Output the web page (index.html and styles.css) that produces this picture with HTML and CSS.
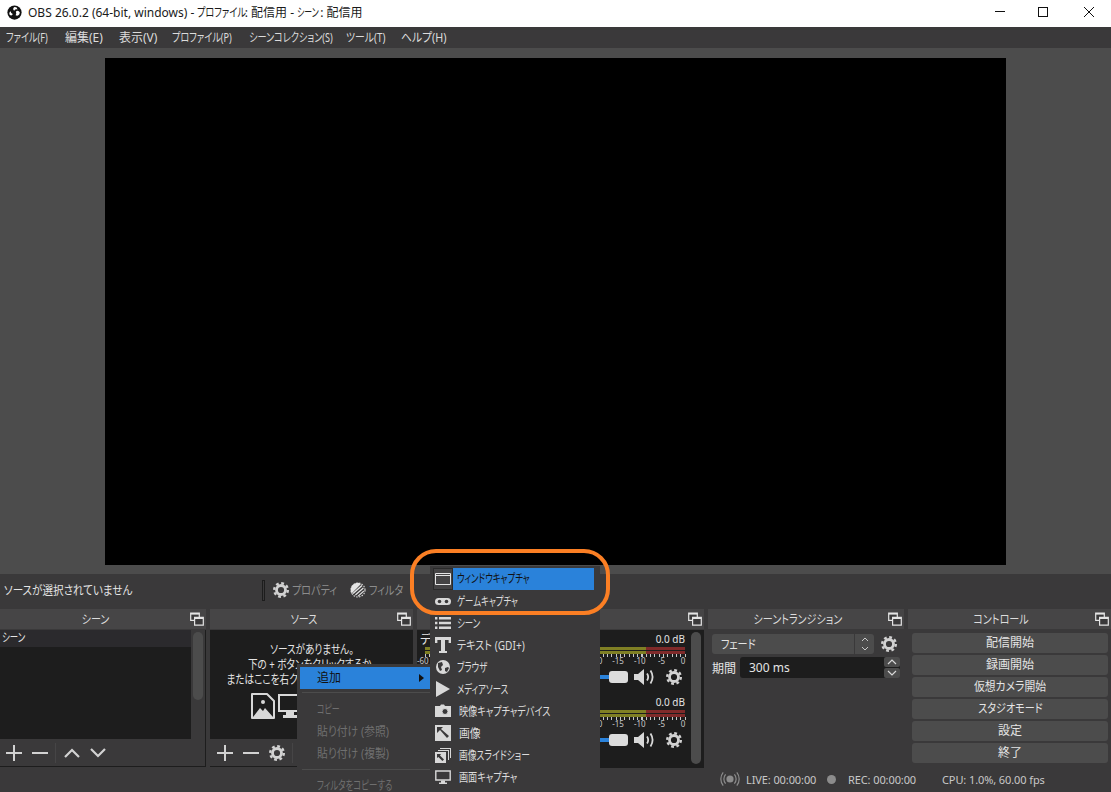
FILE: index.html
```html
<!DOCTYPE html>
<html lang="ja">
<head>
<meta charset="utf-8">
<title>OBS 26.0.2</title>
<link rel="stylesheet" href="styles.css">
</head>
<body>
<svg class="defs" width="0" height="0" aria-hidden="true">
  <symbol id="gear" viewBox="0 0 16 16">
    <circle cx="8" cy="8" r="6.8" fill="none" stroke="#d2d2d2" stroke-width="2.4" stroke-dasharray="2.8 2.54"/>
    <circle cx="8" cy="8" r="4.5" fill="none" stroke="#d2d2d2" stroke-width="2.800"/>
  </symbol>
  <symbol id="float" viewBox="0 0 14 14">
    <path d="M.7 1h8.6v7.4H.7z" fill="#3a393a" stroke="#e4e4e4" stroke-width="1.2"/>
    <path d="M.7 1h8.6v1.6H.7z" fill="#e4e4e4"/>
    <path d="M4.6 5.4h8.7v7.8H4.6z" fill="#3a393a" stroke="#e4e4e4" stroke-width="1.2"/>
    <path d="M4.6 5.4h8.7V7H4.6z" fill="#e4e4e4"/>
  </symbol>
  <symbol id="plus" viewBox="0 0 16 16"><path d="M8 0v16M0 8h16" stroke="#d2d2d2" stroke-width="2"/></symbol>
  <symbol id="minus" viewBox="0 0 16 16"><path d="M0 8h16" stroke="#d2d2d2" stroke-width="2"/></symbol>
  <symbol id="up" viewBox="0 0 16 16"><path d="M1 12l7-7 7 7" fill="none" stroke="#d2d2d2" stroke-width="2.2"/></symbol>
  <symbol id="down" viewBox="0 0 16 16"><path d="M1 4l7 7 7-7" fill="none" stroke="#d2d2d2" stroke-width="2.2"/></symbol>
  <symbol id="speaker" viewBox="0 0 22 16">
    <path d="M0 5h4l6-5v16l-6-5H0z" fill="#d8d8d8"/>
    <path d="M13 4.5q2.4 3.5 0 7M16.5 1.5q4.2 6.5 0 13" fill="none" stroke="#d8d8d8" stroke-width="1.8"/>
  </symbol>
</svg>

<div class="app">
  <header class="titlebar">
    <svg class="logo" viewBox="0 0 16 16">
      <circle cx="8" cy="8" r="7.6" fill="#111"/>
      <path d="M8 2.2a3 3 0 0 1 3.2 2.6 3.4 3.4 0 0 0-3.6 1.3A2.2 2.2 0 0 1 8 2.2z" fill="#fff"/>
      <path d="M13.2 9.8a3 3 0 0 1-4 1.1 3.4 3.4 0 0 0 .2-3.7 2.2 2.2 0 0 1 3.8 2.6z" fill="#fff"/>
      <path d="M3 10.6a3 3 0 0 1 .9-4 3.4 3.4 0 0 0 2.3 3 2.2 2.2 0 0 1-3.2 1z" fill="#fff"/>
    </svg>
    <span class="title-text">OBS 26.0.2 (64-bit, windows) - <span class="k x76 t-prof">プロファイル</span>: 配信用 - <span class="k x66 t-scene">シーン</span>: 配信用</span>
    <div class="win-controls">
      <span class="win-min"></span>
      <span class="win-max"></span>
      <svg class="win-close" viewBox="0 0 10 10"><path d="M0 0l10 10M10 0L0 10" stroke="#111" stroke-width="1"/></svg>
    </div>
  </header>

  <nav class="menubar">
    <span class="k x76">ファイル(F)</span><span>編集(E)</span><span>表示(V)</span><span class="k x76">プロファイル(P)</span><span class="k x76">シーンコレクション(S)</span><span class="k x82">ツール(T)</span><span class="k x90">ヘルプ(H)</span>
  </nav>

  <section class="preview"><div class="canvas"></div></section>

  <section class="ctxbar">
    <span class="ctx-label"><span class="k x88">ソースが選択されていません</span></span>
    <span class="ctx-sep"></span>
    <svg class="ctx-icon"><use href="#gear"/></svg>
    <span class="ctx-btn k x84">プロパティ</span>
    <svg class="ctx-icon filter-icon" viewBox="0 0 16 16">
      <circle cx="8" cy="8" r="7" fill="none" stroke="#d2d2d2" stroke-width="1.2" stroke-dasharray="1.6 1.2"/>
      <path d="M8 .8a7.2 7.2 0 0 0-6.4 10.6L11 2A7 7 0 0 0 8 .8z" fill="#e4e4e4"/>
      <path d="M2.5 11l9-8 1 1-9 8zM5 12.5l8-7 .8 1-8 7zM7.5 14l6-5.5.6 1-5.5 5z" fill="#e4e4e4"/>
    </svg>
    <span class="ctx-btn k x84">フィルタ</span>
  </section>

  <section class="docks">
    <div class="dock dock-scene">
      <div class="dock-title"><span class="k x84">シーン</span><svg class="float-icon"><use href="#float"/></svg></div>
      <div class="dock-body">
        <div class="list-wrap">
          <div class="list">
            <div class="list-row"><span class="k x70">シーン</span></div>
          </div>
          <div class="scroll-gutter"><div class="scroll-thumb"></div></div>
        </div>
        <div class="dock-tools">
          <svg class="tool"><use href="#plus"/></svg>
          <svg class="tool"><use href="#minus"/></svg>
          <span class="tool-sep"></span>
          <svg class="tool"><use href="#up"/></svg>
          <svg class="tool"><use href="#down"/></svg>
        </div>
      </div>
    </div>

    <div class="dock dock-source">
      <div class="dock-title"><span class="k x84">ソース</span><svg class="float-icon"><use href="#float"/></svg></div>
      <div class="dock-body">
        <div class="source-empty">
          <p>ソースがありません。<br>下の + ボタンをクリックするか、<br>またはここを右クリックして追加しましょう</p>
          <div class="source-art">
            <svg class="art-image" viewBox="0 0 24 26">
              <path d="M1 1h15l7 7v17H1z" fill="none" stroke="#d8d8d8" stroke-width="2" stroke-linejoin="round"/>
              <circle cx="12" cy="9" r="2" fill="#d8d8d8"/>
              <path d="M2 24l7-9 3 3 2-3 8 9z" fill="#d8d8d8"/>
            </svg>
            <svg class="art-monitor" viewBox="0 0 24 26">
              <path d="M1 2h22v16H1z" fill="none" stroke="#d8d8d8" stroke-width="2"/>
              <path d="M8 19h8v3h3v3H5v-3h3z" fill="#d8d8d8"/>
            </svg>
          </div>
        </div>
        <div class="dock-tools">
          <svg class="tool"><use href="#plus"/></svg>
          <svg class="tool"><use href="#minus"/></svg>
          <svg class="tool"><use href="#gear"/></svg>
          <span class="tool-sep"></span>
        </div>
      </div>
    </div>

    <div class="dock dock-mixer">
      <div class="dock-title"><span class="k x84">音声ミキサー</span><svg class="float-icon"><use href="#float"/></svg></div>
      <div class="mixer-body">
        <div class="channels">
          <div class="channel">
            <div class="ch-head"><span>デスクトップ音声</span><span>0.0 dB</span></div>
            <div class="meter"><div class="meter-bar"></div><div class="meter-bar"></div></div>
            <div class="ticks"></div>
            <div class="scale"><span>-60</span><span>-55</span><span>-50</span><span>-45</span><span>-40</span><span>-35</span><span>-30</span><span>-25</span><span>-20</span><span>-15</span><span>-10</span><span>-5</span><span>0</span></div>
            <div class="ch-controls">
              <div class="slider"><div class="slider-fill"></div><div class="slider-handle"></div></div>
              <svg class="speaker"><use href="#speaker"/></svg>
              <svg class="ch-gear"><use href="#gear"/></svg>
            </div>
          </div>
          <div class="channel">
            <div class="ch-head"><span>マイク</span><span>0.0 dB</span></div>
            <div class="meter"><div class="meter-bar"></div><div class="meter-bar"></div></div>
            <div class="ticks"></div>
            <div class="scale"><span>-60</span><span>-55</span><span>-50</span><span>-45</span><span>-40</span><span>-35</span><span>-30</span><span>-25</span><span>-20</span><span>-15</span><span>-10</span><span>-5</span><span>0</span></div>
            <div class="ch-controls">
              <div class="slider"><div class="slider-fill"></div><div class="slider-handle"></div></div>
              <svg class="speaker"><use href="#speaker"/></svg>
              <svg class="ch-gear"><use href="#gear"/></svg>
            </div>
          </div>
        </div>
        <div class="mixer-scroll"></div>
      </div>
    </div>

    <div class="dock dock-trans">
      <div class="dock-title"><span class="k x84">シーントランジション</span><svg class="float-icon"><use href="#float"/></svg></div>
      <div class="trans-body">
        <div class="trans-row">
          <div class="select">
            <span class="select-text"><span class="k x84">フェード</span></span>
            <span class="select-arrows">
              <svg viewBox="0 0 8 16"><path d="M1 5l3-3 3 3M1 11l3 3 3-3" fill="none" stroke="#c8c8c8" stroke-width="1"/></svg>
            </span>
          </div>
          <svg class="trans-gear"><use href="#gear"/></svg>
        </div>
        <div class="trans-row">
          <span class="duration-label">期間</span>
          <div class="spin">
            <span class="spin-text">300 ms</span>
            <span class="spin-btns">
              <span class="spin-btn"><svg viewBox="0 0 10 6"><path d="M1 5l4-4 4 4" fill="none" stroke="#d8d8d8" stroke-width="1.2"/></svg></span>
              <span class="spin-btn"><svg viewBox="0 0 10 6"><path d="M1 1l4 4 4-4" fill="none" stroke="#d8d8d8" stroke-width="1.2"/></svg></span>
            </span>
          </div>
        </div>
      </div>
    </div>

    <div class="dock dock-control">
      <div class="dock-title"><span class="k x84">コントロール</span><svg class="float-icon"><use href="#float"/></svg></div>
      <div class="control-body">
        <button class="ctl">配信開始</button>
        <button class="ctl">録画開始</button>
        <button class="ctl"><span class="k x90">仮想カメラ開始</span></button>
        <button class="ctl"><span class="k x84">スタジオモード</span></button>
        <button class="ctl">設定</button>
        <button class="ctl">終了</button>
      </div>
    </div>
  </section>

  <footer class="status">
    <svg class="live-icon" viewBox="0 0 20 16">
      <circle cx="10" cy="8" r="3.6" fill="#8c8c8c"/>
      <path d="M5.6 3.4a7 7 0 0 0 0 9.2M14.4 3.4a7 7 0 0 1 0 9.2M3.2 1.4a10.4 10.4 0 0 0 0 13.2M16.8 1.4a10.4 10.4 0 0 1 0 13.2" fill="none" stroke="#8c8c8c" stroke-width="1.2"/>
    </svg>
    <span class="st-live">LIVE: 00:00:00</span>
    <span class="rec-dot"></span>
    <span class="st-rec">REC: 00:00:00</span>
    <span class="st-cpu">CPU: 1.0%, 60.00 fps</span>
  </footer>

  <div class="menu menu-main">
    <div class="mi mi-active"><span>追加</span><i class="arrow"></i></div>
    <div class="m-sep"></div>
    <div class="mi mi-off"><span class="k x66">コピー</span></div>
    <div class="mi mi-off"><span class="k x90">貼り付け (参照)</span></div>
    <div class="mi mi-off"><span class="k x90">貼り付け (複製)</span></div>
    <div class="m-sep"></div>
    <div class="mi mi-off"><span class="k x70">フィルタをコピーする</span></div>
  </div>

  <div class="menu menu-sub">
    <div class="si si-active">
      <span class="si-icon si-icon-box">
        <svg viewBox="0 0 16 14"><path d="M.5 1.500h15v11H.5z" fill="none" stroke="#e4e4e4"/><path d="M.5 3.500h15" stroke="#e4e4e4"/></svg>
      </span>
      <span class="si-text"><span class="k x70">ウィンドウキャプチャ</span></span>
    </div>
    <div class="si">
      <span class="si-icon"><svg viewBox="0 0 16 14"><rect y="4" width="16" height="7" rx="3.5" fill="#d8d8d8"/><circle cx="4.500" cy="7.500" r="1.800" fill="#3a393a"/><circle cx="11.500" cy="7.500" r="1.800" fill="#3a393a"/></svg></span>
      <span class="si-text k x70">ゲームキャプチャ</span>
    </div>
    <div class="si">
      <span class="si-icon"><svg viewBox="0 0 16 14"><path d="M0 1h2.400v2.400H0zM4 1h12v2.400H4zM0 5.800h2.400v2.400H0zM4 5.800h12v2.400H4zM0 10.600h2.400V13H0zM4 10.600h12V13H4z" fill="#d8d8d8"/></svg></span>
      <span class="si-text k x70">シーン</span>
    </div>
    <div class="si">
      <span class="si-icon"><svg viewBox="0 0 16 16"><rect x="0" y="0" width="16" height="3" fill="#d8d8d8"/><rect x="0" y="0" width="2.400" height="6" fill="#d8d8d8"/><rect x="13.600" y="0" width="2.400" height="6" fill="#d8d8d8"/><rect x="6" y="0" width="4" height="15" fill="#d8d8d8"/><rect x="4" y="14" width="8" height="2" fill="#d8d8d8"/></svg></span>
      <span class="si-text k x84">テキスト (GDI+)</span>
    </div>
    <div class="si">
      <span class="si-icon"><svg viewBox="0 0 16 16"><circle cx="8" cy="8" r="7" fill="#d8d8d8"/><path d="M3 4l4-1 1 3-2 2 1 3-2 1-2-4zM10 9l3-1 1 1-2 4-2-1z" fill="#3a393a"/></svg></span>
      <span class="si-text k x70">ブラウザ</span>
    </div>
    <div class="si">
      <span class="si-icon"><svg viewBox="0 0 16 16"><path d="M1 0l14 8-14 8z" fill="#d8d8d8"/></svg></span>
      <span class="si-text k x70">メディアソース</span>
    </div>
    <div class="si">
      <span class="si-icon"><svg viewBox="0 0 16 14"><path d="M0 2h5l1-1.400h3L10 2h6v11H0z" fill="#d8d8d8"/><circle cx="10" cy="7.500" r="3" fill="#3a393a" stroke="#d8d8d8"/></svg></span>
      <span class="si-text si-kanji k x76">映像キャプチャデバイス</span>
    </div>
    <div class="si">
      <span class="si-icon"><svg viewBox="0 0 16 16"><rect width="16" height="16" fill="#d8d8d8"/><path d="M2 2h6L6 4l8 7-2 2-7-8-3 3z" fill="#3a393a"/></svg></span>
      <span class="si-text si-kanji k x90">画像</span>
    </div>
    <div class="si">
      <span class="si-icon"><svg viewBox="0 0 16 16"><path d="M5 1h11v10h-1V2H5z" fill="#d8d8d8"/><path d="M3 3h11v10h-1V4H3z" fill="#d8d8d8"/><rect y="5" width="11" height="11" fill="#d8d8d8"/><path d="M2 7h4L5 8.400l4 4-1.600 1.600-4-4L2 11z" fill="#3a393a"/></svg></span>
      <span class="si-text si-kanji k x73">画像スライドショー</span>
    </div>
    <div class="si">
      <span class="si-icon"><svg viewBox="0 0 16 14"><path d="M.8 1h14.400v9H.8z" fill="none" stroke="#d8d8d8" stroke-width="1.400"/><path d="M6 10.500h4v2h2V14H4v-1.500h2z" fill="#d8d8d8"/></svg></span>
      <span class="si-text si-kanji k x76">画面キャプチャ</span>
    </div>
  </div>

  <div class="highlight-ring"></div>
</div>
</body>
</html>
```

FILE: styles.css
```css
* { box-sizing: border-box; }
html, body { margin: 0; padding: 0; }
body {
  font-family: "Noto Sans", "Noto Sans CJK JP", sans-serif;
  font-size: 12px;
  font-feature-settings: "palt";
  color: #e4e4e4;
  background: #3a393a;
  overflow: hidden;
}
.defs { position: absolute; }
svg { display: block; }

.k { display: inline-block; white-space: nowrap; transform: scaleX(var(--sx, .76)); transform-origin: left center; }
.x66 { --sx: .66; }
.x70 { --sx: .7; }
.x73 { --sx: .73; }
.x76 { --sx: .76; }
.x82 { --sx: .82; }
.x84 { --sx: .84; }
.x88 { --sx: .88; }
.x90 { --sx: .9; }

.app {
  position: relative;
  width: 1111px;
  height: 792px;
  display: flex;
  flex-direction: column;
  overflow: hidden;
  background: #3a393a;
}

/* title bar */
.titlebar {
  height: 27px;
  background: #fff;
  color: #1a1a1a;
  display: flex;
  align-items: center;
  padding-left: 7px;
  flex: none;
}
.logo { width: 15px; height: 15px; margin-right: 6px; margin-top: -3px; }
.title-text { font-size: 12px; margin-top: -3px; white-space: nowrap; }
.t-prof { margin-right: -17px; }
.t-scene { margin-right: -10px; }
.win-controls { margin-left: auto; display: flex; align-items: center; margin-top: -4px; }
.win-min { width: 10px; height: 1px; background: #111; margin-right: 33px; }
.win-max { width: 10px; height: 10px; border: 1px solid #111; margin-right: 36px; }
.win-close { width: 10px; height: 10px; margin-right: 17px; }

/* menu bar */
.menubar {
  height: 21px;
  flex: none;
  display: grid;
  grid-template-columns: 59px 54px 53px 77px 97px 55px auto;
  align-items: center;
  padding: 0 0 1px 6px;
  font-size: 12px;
  color: #dcdcdc;
  background: #3a393a;
  white-space: nowrap;
}

/* preview */
.preview {
  height: 526px;
  flex: none;
  background: #4c4c4c;
  padding: 10px 105px 0;
}
.canvas { width: 901px; height: 507px; background: #000; }

/* source toolbar */
.ctxbar {
  height: 33px;
  flex: none;
  display: flex;
  align-items: center;
  padding: 0 0 1px 4px;
  background: #3a393a;
}
.ctx-label { width: 258px; color: #e4e4e4; }
.ctx-sep { width: 3px; height: 21px; border: 1px solid #1d1d1d; background: #3a393a; margin-right: 8px; }
.ctx-icon { width: 16px; height: 16px; margin-right: 3px; }
.filter-icon { margin-left: 4px; }
.ctx-btn { color: #8c8c8c; }

/* docks */
.docks {
  height: 159px;
  flex: none;
  margin-top: 2px;
  display: flex;
  gap: 4px;
}
.dock { display: flex; flex-direction: column; flex: none; }
.dock-scene { width: 206px; }
.dock-source { width: 203px; }
.dock-mixer { width: 287px; }
.dock-trans { width: 196px; }
.dock-control { width: 203px; }

.dock-title {
  height: 20px;
  flex: none;
  position: relative;
  background: #464546;
  text-align: center;
  padding-right: 16px;
  line-height: 21px;
  color: #dcdcdc;
}
.dock-title .k, .ctl .k { transform-origin: center; }
.float-icon { position: absolute; right: 2px; top: 3px; width: 14px; height: 14px; }

.dock-body {
  flex: 1;
  margin-top: 1px;
  display: flex;
  flex-direction: column;
  height: 137px;
  max-height: 137px;
  border-right: 1px solid #1d1d1d;
  border-bottom: 1px solid #1d1d1d;
}
.list-wrap { height: 109px; flex: none; display: flex; }
.list { width: 191px; background: #1d1d1d; flex: none; }
.list-row { height: 17px; line-height: 16px; padding-left: 2px; background: #2b2a2d; color: #e4e4e4; }
.scroll-gutter { flex: 1; padding: 2px 2px 0; }
.scroll-thumb { width: 10px; height: 68px; border-radius: 5px; background: #4c4c4c; }

.dock-tools {
  height: 27px;
  flex: none;
  display: flex;
  align-items: center;
  padding-left: 6px;
  gap: 10px;
}
.dock-source .dock-tools { padding-left: 7px; }
.tool { width: 16px; height: 16px; }
.tool-sep { width: 1px; height: 20px; background: #464546; margin: 0 -2px 0 -3px; }

.source-empty {
  height: 109px;
  flex: none;
  background: #1d1d1d;
  text-align: center;
  overflow: hidden;
}
.source-empty p {
  width: 240px;
  margin: 12px 0 0 -18px;
  line-height: 15px;
  color: #e4e4e4;
  white-space: nowrap;
  transform: scaleX(.8);
}
.source-art { display: flex; gap: 3px; margin: 6px 0 0 41px; }
.art-image, .art-monitor { width: 24px; height: 26px; }

/* mixer */
.mixer-body {
  height: 138px;
  margin-top: 1px;
  flex: none;
  display: flex;
  background: #1d1d1d;
  overflow: hidden;
}
.channels { width: 274px; flex: none; }
.channel { height: 63px; padding: 2px 6px 0 8px; }
.ch-head {
  height: 15px;
  display: flex;
  justify-content: space-between;
  line-height: 15px;
  font-size: 10px;
  white-space: nowrap;
}
.ch-head span:first-child { font-size: 12px; margin-left: -5px; }
.meter { height: 7px; display: flex; flex-direction: column; justify-content: space-between; }
.meter-bar {
  height: 3px;
  background: linear-gradient(to right, #7f7f24 0, #7f7f24 85%, #7f2a2a 85%, #7f2a2a 100%);
}
.ticks {
  height: 3px;
  margin-right: -1px;
  background: repeating-linear-gradient(to right, #c8c8c8 0, #c8c8c8 1px, transparent 1px, transparent 4.33px);
}
.scale {
  display: grid;
  grid-template-columns: repeat(13, 1fr);
  margin: 0 -9px 0 -13px;
  height: 8px;
  font-size: 8px;
  line-height: 8px;
  text-align: center;
  color: #c8c8c8;
}
.ch-controls { display: flex; align-items: center; height: 24px; }
.slider { position: relative; width: 208px; margin-left: -5px; height: 12px; }
.slider-fill { position: absolute; left: 0; right: 0; top: 4px; height: 4px; background: #2a82da; }
.slider-handle { position: absolute; right: 0; top: 0; width: 19px; height: 12px; border-radius: 3px; background: #dcdcdc; }
.speaker { width: 22px; height: 16px; margin-left: 6px; }
.ch-gear { width: 16px; height: 16px; margin-left: 10px; }
.mixer-scroll { width: 10px; height: 132px; border-radius: 5px; background: #4c4c4c; margin-top: 2px; }

/* transitions */
.trans-body { padding: 5px 4px 0; }
.trans-row { display: flex; align-items: center; }
.trans-row + .trans-row { margin-top: 3px; }
.select {
  width: 162px;
  height: 20px;
  border-radius: 3px;
  background: #4c4c4c;
  display: flex;
  align-items: center;
}
.select-text { flex: 1; padding-left: 9px; }
.select-arrows { width: 20px; height: 20px; border-left: 1px solid #3a393a; display: flex; align-items: center; justify-content: center; }
.select-arrows svg { width: 8px; height: 16px; }
.trans-gear { width: 16px; height: 16px; margin-left: 7px; }
.duration-label { width: 28px; flex: none; font-size: 12px; }
.spin {
  width: 160px;
  height: 21px;
  display: flex;
  background: #1d1d1d;
  border-radius: 3px;
}
.spin-text { flex: 1; line-height: 21px; padding-left: 9px; }
.spin-btns { width: 16px; display: flex; flex-direction: column; gap: 1px; }
.spin-btn { flex: 1; background: #4c4c4c; display: flex; align-items: center; justify-content: center; border-radius: 2px; }
.spin-btn svg { width: 10px; height: 6px; }

/* controls */
.control-body {
  margin-top: 4px;
  padding: 0 3px 0 4px;
  display: flex;
  flex-direction: column;
  gap: 2px;
}
.ctl {
  height: 20px;
  padding: 0;
  border: 0;
  border-radius: 3px;
  background: #4c4c4c;
  color: #e4e4e4;
  font: inherit;
  font-feature-settings: inherit;
  line-height: 20px;
  white-space: nowrap;
}

/* status */
.status {
  flex: 1;
  display: flex;
  align-items: center;
  padding: 0 0 2px 720px;
  font-size: 11px;
  color: #c8c8c8;
  white-space: nowrap;
  letter-spacing: -.1px;
}
.live-icon { width: 20px; height: 16px; margin-right: 6px; }
.st-live { width: 81px; }
.rec-dot { width: 9px; height: 9px; border-radius: 50%; background: #8c8c8c; margin-right: 12px; }
.st-rec { width: 94px; }

/* overlays */
.menu { position: absolute; background: #3a393a; }
.menu-main { left: 297px; top: 664px; width: 133px; height: 128px; padding: 3px 0 0 3px; overflow: hidden; }
.mi { height: 22px; line-height: 22px; padding-left: 17px; position: relative; white-space: nowrap; }
.mi-active { background: #2a82da; color: #111; }
.mi-off { color: #6f6f6f; }
.arrow {
  position: absolute;
  right: 6px;
  top: 7px;
  border-left: 5px solid #111;
  border-top: 4px solid transparent;
  border-bottom: 4px solid transparent;
}
.m-sep { height: 1px; margin: 3px 0 6px 2px; background: #4c4c4c; }
.mi-off + .m-sep { margin: 4px 0 5px 2px; }

.menu-sub { left: 430px; top: 566px; width: 170px; height: 226px; padding: 2px 6px 0 3px; }
.si { height: 22px; display: flex; align-items: center; }
.si-icon { width: 20px; height: 22px; display: flex; align-items: center; justify-content: center; flex: none; }
.si-icon svg { width: 16px; height: 16px; }
.si-icon-box { border: 1px solid #2a2a2a; background: #444344; }
.si-text { margin-left: 4px; color: #dcdcdc; white-space: nowrap; }
.si-kanji { margin-left: 6px; }
.si-active .si-text { flex: 1; margin-left: 0; padding-left: 4px; background: #2a82da; color: #111; line-height: 22px; }

.highlight-ring {
  position: absolute;
  left: 410px;
  top: 549px;
  width: 200px;
  height: 66px;
  border: 4px solid #fb7f24;
  border-radius: 26px;
}
```
